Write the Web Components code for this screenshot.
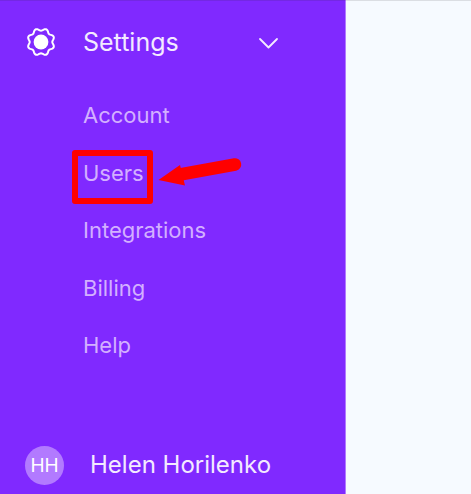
<!DOCTYPE html>
<html lang="en">
<head>
<meta charset="utf-8">
<title>Settings</title>
<style>
  html, body { height: 100%; }
  body { margin: 0; font-family: Inter, "Liberation Sans", sans-serif; }
</style>
</head>
<body>
<app-shell>
  <side-bar slot="side">
    <nav-group label="Settings">
      <nav-item>Account</nav-item>
      <nav-item marked>Users</nav-item>
      <nav-item>Integrations</nav-item>
      <nav-item>Billing</nav-item>
      <nav-item>Help</nav-item>
    </nav-group>
    <user-badge slot="footer" initials="HH">Helen Horilenko</user-badge>
  </side-bar>
</app-shell>
<script>
  const define = (name, render) => customElements.define(name, class extends HTMLElement {
    constructor() {
      super();
      this.attachShadow({ mode: 'open' }).innerHTML = render(this);
    }
  });

  // Closed wavy outline with eight lobes, centred on 16,16.
  const gearPath = () => {
    const points = [];
    for (let deg = 0; deg < 360; deg += 3) {
      const a = deg * Math.PI / 180;
      const r = 12.5 - 1.2 * Math.cos(8 * a);
      points.push((16 + r * Math.cos(a)).toFixed(2) + ' ' + (16 + r * Math.sin(a)).toFixed(2));
    }
    return 'M' + points.join('L') + 'Z';
  };

  define('app-shell', () => `
    <style>
      :host { display: flex; min-height: 100%; box-sizing: border-box; background: #f6faff; position: relative; }
      :host::before { content: ""; position: absolute; inset: 0 0 auto; height: 1px; background: rgba(40, 40, 40, .13); }
      slot { display: contents; }
      main { flex: 1; }
      ::slotted(*) { flex: 0 1 346px; }
    </style>
    <slot name="side"></slot>
    <main></main>`);

  define('side-bar', () => `
    <style>
      :host { display: flex; flex-direction: column; justify-content: space-between; box-sizing: border-box;
        padding: 22px 0 9px; background: #8029ff; border-right: 1px solid #b27aff; color: #f3eaff; }
    </style>
    <nav><slot></slot></nav>
    <slot name="footer"></slot>`);

  define('nav-group', el => `
    <style>
      :host { display: block; }
      button { display: flex; align-items: center; width: 100%; height: 40px; padding: 0 66px 0 25px;
        border: 0; background: none; color: inherit; font: 25px/40px Inter, "Liberation Sans", sans-serif; text-align: left; }
      .gear { width: 32px; height: 32px; margin-right: 26px; }
      .label { flex: 1; }
      .chevron { width: 22px; height: 14px; }
      .items { display: flex; flex-direction: column; justify-content: space-between; min-height: 260px; margin-top: 38px; padding-left: 83px; }
    </style>
    <button type="button" aria-expanded="true">
      <svg class="gear" viewBox="0 0 32 32" aria-hidden="true">
        <path d="${gearPath()}" fill="none" stroke="#fff" stroke-width="2" stroke-linejoin="round"/>
        <circle cx="16" cy="16" r="7.4" fill="#fff"/>
      </svg>
      <span class="label">${el.getAttribute('label')}</span>
      <svg class="chevron" viewBox="0 0 22 14" aria-hidden="true">
        <path d="M3 4 11.500 12.500 20 4" fill="none" stroke="#f3eaff" stroke-width="1.800" stroke-linecap="round" stroke-linejoin="round"/>
      </svg>
    </button>
    <div class="items"><slot></slot></div>`);

  define('nav-item', el => `
    <style>
      :host { display: flex; position: relative; height: 30px; }
      a { color: #d3b0ff; font-size: 22px; line-height: 30px; text-decoration: none; }
      .frame { position: absolute; left: -11px; top: -8px; width: 81px; height: 54px; box-sizing: border-box;
        border: 6px solid #f00; border-radius: 3px; pointer-events: none; }
      .arrow { position: absolute; left: 74px; top: -5px; width: 86px; height: 34px; pointer-events: none; }
    </style>
    <a href="#"><slot></slot></a>
    ${el.hasAttribute('marked') ? `
      <span class="frame"></span>
      <svg class="arrow" viewBox="0 0 86 34" aria-hidden="true">
        <path d="M1.5 27 23 12 28 32.500Z" fill="#f00"/>
        <path d="M23 21.500 78 11.500" stroke="#f00" stroke-width="12.500" stroke-linecap="round"/>
      </svg>` : ''}`);

  define('user-badge', el => `
    <style>
      :host { display: flex; align-items: center; padding-left: 25px; gap: 26px; font-size: 24px; line-height: 40px; }
      .avatar { flex: none; width: 39px; height: 39px; border-radius: 50%; background: #b27aff; color: #fff;
        font-size: 19px; line-height: 39px; text-align: center; }
    </style>
    <span class="avatar">${el.getAttribute('initials')}</span>
    <span><slot></slot></span>`);
</script>
</body>
</html>
